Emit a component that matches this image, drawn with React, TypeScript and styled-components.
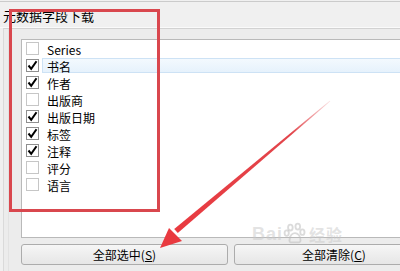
import React from 'react';
import styled, { createGlobalStyle } from 'styled-components';

const GlobalStyle = createGlobalStyle`
  html, body {
    margin: 0;
    padding: 0;
    background: #f0f0f0;
    overflow: hidden;
  }
  body {
    font-family: "Noto Sans CJK SC", "Noto Sans", sans-serif;
    font-size: 12px;
    color: #000;
  }
`;

type Field = {
  label: string;
  checked: boolean;
};

const fields: Field[] = [
  { label: 'Series', checked: false },
  { label: '书名', checked: true },
  { label: '作者', checked: true },
  { label: '出版商', checked: false },
  { label: '出版日期', checked: true },
  { label: '标签', checked: true },
  { label: '注释', checked: true },
  { label: '评分', checked: false },
  { label: '语言', checked: false }
];

const Page = styled.div`
  position: relative;
  width: 400px;
  height: 271px;
  overflow: hidden;
`;

const Header = styled.div`
  margin-top: 1px;
  height: 27px;
  border-top: 1px solid #cbcbcb;
  display: flex;
  align-items: center;
  padding-left: 3px;
  font-size: 13px;
  line-height: 15px;
  padding-top: 1px;
  box-sizing: border-box;
  border-bottom: 1px solid #fafafa;
  white-space: nowrap;
`;

const Frame = styled.div`
  margin-left: 3px;
  border-top: 1px solid #d2d2d2;
  border-left: 1px solid #dadada;
  height: 250px;
  background: #ececec;
`;

const Inner = styled.div`
  margin-left: 4px;
  border-left: 1px solid #e2e2e2;
  padding: 10px 0 0 12px;
  height: 100%;
  box-sizing: border-box;
`;

const ListBox = styled.div`
  width: 520px;
  height: 199px;
  box-sizing: border-box;
  border: 1px solid #b9b9b9;
  background: #fff;
`;

const Row = styled.div`
  height: 17px;
  display: flex;
  align-items: center;
  padding-left: 4px;
`;

const Box = styled.span<{ $checked: boolean }>`
  width: 11px;
  height: 11px;
  border: 1px solid ${p => (p.$checked ? '#8f8f8f' : '#c6c6c6')};
  background: #fff;
  display: flex;
  align-items: center;
  justify-content: center;
  flex-shrink: 0;
`;

const Label = styled.span<{ $selected?: boolean }>`
  margin-left: 3px;
  padding-left: 4px;
  height: 15px;
  line-height: 15px;
  flex: 1;
  box-sizing: border-box;
  border: 1px solid ${p => (p.$selected ? '#cde2f5' : 'transparent')};
  background: ${p => (p.$selected ? 'linear-gradient(#f3f9fe, #e6f2fc)' : 'transparent')};
`;

const ButtonRow = styled.div`
  display: flex;
  gap: 6px;
  margin-top: 6px;
  width: 520px;
`;

const Button = styled.div<{ $width: number }>`
  width: ${p => p.$width}px;
  flex-shrink: 0;
  height: 21px;
  box-sizing: border-box;
  border: 1px solid #acacac;
  border-radius: 3px;
  background: linear-gradient(#f6f6f6, #e6e6e6);
  display: flex;
  align-items: center;
  justify-content: center;
  font-size: 12px;
  line-height: 14px;
  padding-top: 1px;

  u {
    text-decoration: underline;
    text-underline-offset: 1px;
  }
`;

const Highlight = styled.div`
  position: absolute;
  left: 9px;
  top: 9px;
  width: 151px;
  height: 203px;
  box-sizing: border-box;
  border: 3px solid #d9474e;
`;

const Overlay = styled.svg`
  position: absolute;
  left: 0;
  top: 0;
  pointer-events: none;
`;

const Watermark = styled.div`
  position: absolute;
  left: 252px;
  top: 222px;
  display: flex;
  align-items: center;
  color: rgba(200, 200, 200, 0.5);
  font-family: "Liberation Sans", sans-serif;
  font-weight: bold;
  font-size: 18px;
  line-height: 20px;
  letter-spacing: 1px;
`;

const WatermarkCjk = styled.span`
  font-family: "Noto Sans CJK SC", sans-serif;
  font-size: 16px;
  margin-left: 2px;
`;

const Check = () => (
  <svg width="11" height="11" viewBox="0 0 11 11">
    <path d="M1.5 5.5 L4.2 8.8 L9.5 1.2" fill="none" stroke="#000" strokeWidth="2" />
  </svg>
);

const Paw = () => (
  <svg width="24" height="24" viewBox="0 0 26 26">
    <g fill="none" stroke="rgba(190,190,190,0.55)" strokeWidth="2">
      <ellipse cx="8" cy="6" rx="2.5" ry="3.2" />
      <ellipse cx="16" cy="5" rx="2.5" ry="3.2" />
      <ellipse cx="4" cy="12" rx="2.3" ry="3" />
      <ellipse cx="21" cy="11" rx="2.3" ry="3" />
      <path d="M7 20 C7 14 11 12 13 12 C16 12 19 15 19 20 C19 23 15 22 13 22 C10 22 7 23 7 20 Z" />
    </g>
  </svg>
);

export default function App(): JSX.Element {
  return (
    <>
      <GlobalStyle />
      <Page>
        <Header>元数据字段下载</Header>
        <Frame>
          <Inner>
            <ListBox>
              {fields.map((f, i) => (
                <Row key={f.label}>
                  <Box $checked={f.checked}>{f.checked && <Check />}</Box>
                  <Label $selected={i === 1}>{f.label}</Label>
                </Row>
              ))}
            </ListBox>
            <ButtonRow>
              <Button $width={207}>全部选中(<u>S</u>)</Button>
              <Button $width={200}>全部清除(<u>C</u>)</Button>
            </ButtonRow>
          </Inner>
        </Frame>
        <Watermark>
          Bai
          <Paw />
          <WatermarkCjk>经验</WatermarkCjk>
        </Watermark>
        <Highlight />
        <Overlay width="400" height="271" viewBox="0 0 400 271">
          <defs>
            <linearGradient id="shaft" x1="176" y1="231" x2="330" y2="101" gradientUnits="userSpaceOnUse">
              <stop offset="0" stopColor="#e93a40" />
              <stop offset="0.75" stopColor="#e2454b" />
              <stop offset="1" stopColor="#e2454b" stopOpacity="0.15" />
            </linearGradient>
          </defs>
          <polygon points="174.2,229 177.8,233.1 330.3,101.3 329.7,100.7" fill="url(#shaft)" />
          <polygon points="160,248 169,228 182,241" fill="#e93a40" />
        </Overlay>
      </Page>
    </>
  );
}
